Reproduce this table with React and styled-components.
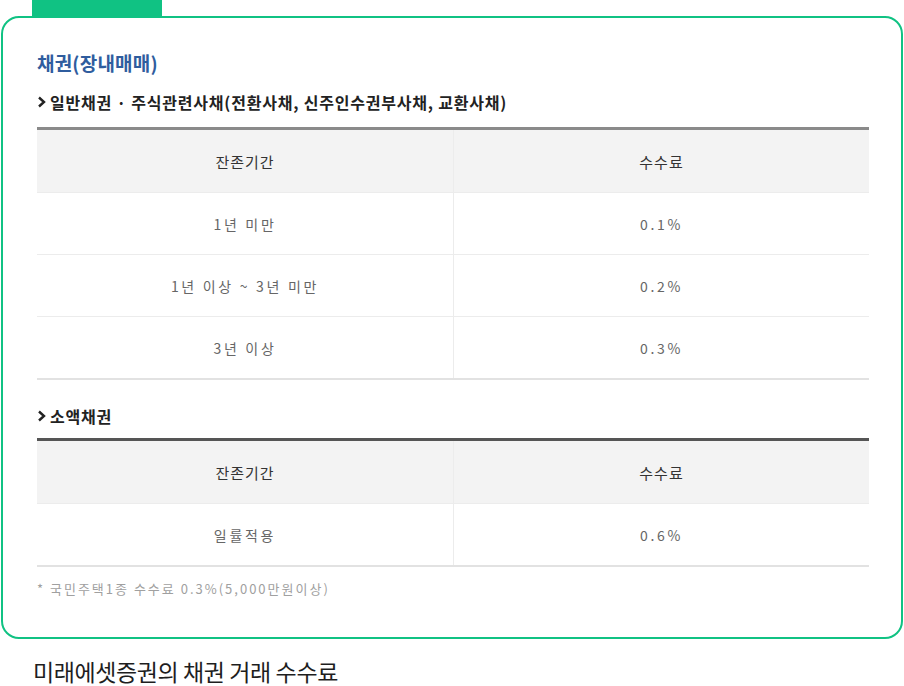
import React from "react";
import styled, { createGlobalStyle } from "styled-components";

const Global = createGlobalStyle`
    body {
        margin: 0;
        background: #fff;
        font-family: "Noto Sans CJK KR", "Noto Sans", sans-serif;
    }
`;

const Page = styled.div`
    width: 904px;
    height: 686px;
    display: flex;
    flex-direction: column;
`;

const Tab = styled.div`
    flex-shrink: 0;
    margin-left: 32px;
    width: 130px;
    height: 16px;
    background-color: #10c283;
`;

const Card = styled.div`
    flex-shrink: 0;
    margin: 0 1px;
    height: 623px;
    box-sizing: border-box;
    border: 2px solid #10c283;
    border-radius: 18px;
    padding: 32px 32px 0 34px;
    display: flex;
    flex-direction: column;
`;

const Title = styled.h2`
    margin: 0;
    font-size: 19px;
    font-weight: 700;
    color: #2f5d9e;
    letter-spacing: 0.2px;
    line-height: 26px;
`;

const Sub = styled.div`
    display: flex;
    align-items: center;
    gap: 4px;
    margin-top: ${(props) => props.top}px;
    font-size: 16px;
    font-weight: 700;
    color: #222;
    letter-spacing: 0.8px;
    line-height: 20px;
`;

const Table = styled.div`
    margin-top: ${(props) => props.top}px;
    border-top: 3px solid ${(props) => props.line};
    border-bottom: 2px solid #e2e2e2;
`;

const Row = styled.div`
    display: grid;
    grid-template-columns: 416px 1fr;
    box-sizing: border-box;
    height: 62px;
    background: ${(props) => (props.head ? "#f3f3f3" : "#fff")};
    & + & {
        border-top: 1px solid #ececec;
    }
`;

const Cell = styled.div`
    display: flex;
    align-items: center;
    justify-content: center;
    font-size: ${(props) => (props.head ? "15px" : "14px")};
    color: ${(props) => (props.head ? "#333" : "#666")};
    letter-spacing: ${(props) => (props.head ? "1px" : "2.7px")};
    & + & {
        border-left: 1px solid #ececec;
    }
`;

const Note = styled.div`
    margin-top: 12px;
    font-size: 13px;
    color: #a0a0a0;
    letter-spacing: 2px;
`;

const Caption = styled.div`
    flex-shrink: 0;
    margin: 20px 0 0 33px;
    font-size: 23px;
    line-height: 24px;
    color: #1e1e1e;
    letter-spacing: -0.4px;
`;

const Arrow = () => (
    <svg width="9" height="12" viewBox="0 0 9 12">
        <path d="M2 1.5 L7 6 L2 10.5" fill="none" stroke="#222" strokeWidth="2.4" />
    </svg>
);

const FeeTable = ({ top, line, rows }) => (
    <Table top={top} line={line}>
        <Row head>
            <Cell head>잔존기간</Cell>
            <Cell head>수수료</Cell>
        </Row>
        {rows.map((r) => (
            <Row key={r[0]}>
                <Cell>{r[0]}</Cell>
                <Cell>{r[1]}</Cell>
            </Row>
        ))}
    </Table>
);

export default function App() {
    return (
        <Page>
            <Global />
            <Tab />
            <Card>
                <Title>채권(장내매매)</Title>
                <Sub top={16}>
                    <Arrow />
                    일반채권 · 주식관련사채(전환사채, 신주인수권부사채, 교환사채)
                </Sub>
                <FeeTable
                    top={15}
                    line="#8a8a8a"
                    rows={[
                        ["1년 미만", "0.1%"],
                        ["1년 이상 ~ 3년 미만", "0.2%"],
                        ["3년 이상", "0.3%"],
                    ]}
                />
                <Sub top={26}>
                    <Arrow />
                    소액채권
                </Sub>
                <FeeTable top={12} line="#555" rows={[["일률적용", "0.6%"]]} />
                <Note>* 국민주택1종 수수료 0.3%(5,000만원이상)</Note>
            </Card>
            <Caption>미래에셋증권의 채권 거래 수수료</Caption>
        </Page>
    );
}
